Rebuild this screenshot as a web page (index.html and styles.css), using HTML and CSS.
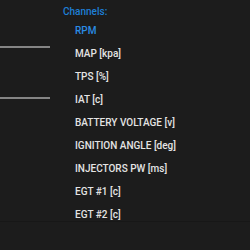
FILE: index.html
```html
<!DOCTYPE html>
<html>
<head>
<meta charset="utf-8">
<link rel="stylesheet" href="styles.css">
</head>
<body>
<div class="main">
  <div class="side">
    <div class="rule rule-1"></div>
    <div class="rule rule-2"></div>
  </div>
  <div class="channels">
    <div class="title">Channels:</div>
    <ul class="list">
      <li class="item active">RPM</li>
      <li class="item">MAP [kpa]</li>
      <li class="item">TPS [%]</li>
      <li class="item">IAT [c]</li>
      <li class="item">BATTERY VOLTAGE [v]</li>
      <li class="item">IGNITION ANGLE [deg]</li>
      <li class="item">INJECTORS PW [ms]</li>
      <li class="item">EGT #1 [c]</li>
      <li class="item">EGT #2 [c]</li>
    </ul>
  </div>
</div>
<div class="footer"></div>
</body>
</html>
```

FILE: styles.css
```css
html, body {
  margin: 0;
  padding: 0;
  width: 250px;
  height: 250px;
  overflow: hidden;
  background: #1c1c1c;
  font-family: Roboto, "Liberation Sans", sans-serif;
}
.main {
  display: flex;
  height: 221px;
}
.side {
  width: 50px;
  flex: none;
  display: flex;
  flex-direction: column;
}
.rule {
  height: 2px;
  background: #858585;
}
.rule-1 {
  margin-top: 46px;
}
.rule-2 {
  margin-top: 49px;
}
.channels {
  margin-left: 13px;
  flex: 1;
}
.title {
  margin-top: 5px;
  height: 14px;
  line-height: 14px;
  font-size: 10px;
  font-weight: 500;
  color: #1e7fd6;
}
.list {
  list-style: none;
  margin: 0;
  padding: 0 0 0 12px;
}
.item {
  height: 23px;
  line-height: 23px;
  font-size: 10px;
  font-weight: 500;
  color: #e4e4e4;
  white-space: nowrap;
}
.item.active {
  color: #2a8ce6;
}
.footer {
  height: 29px;
  border-top: 1px solid #171717;
  background: #1c1c1c;
}
```
